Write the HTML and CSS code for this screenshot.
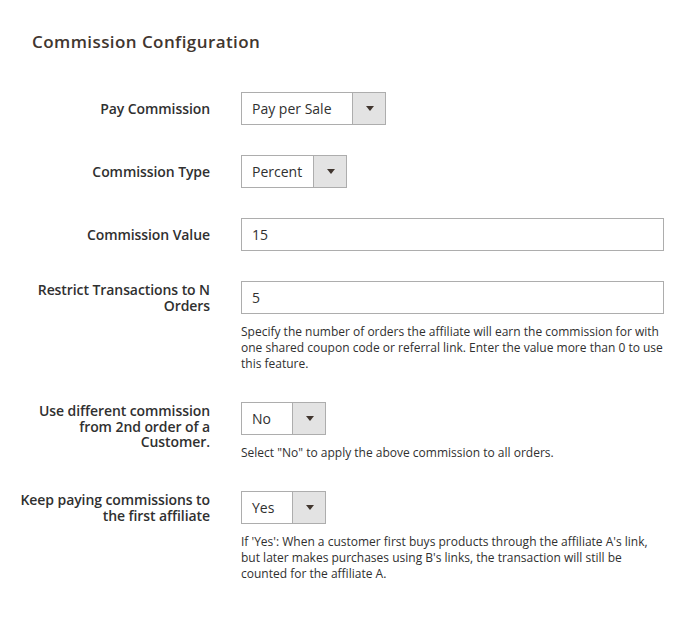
FILE: index.html
```html
<!DOCTYPE html>
<html>
<head>
<meta charset="utf-8">
<link rel="stylesheet" href="styles.css">
</head>
<body>
<div class="page">
  <h2 class="title">Commission Configuration</h2>
  <div class="fields">
    <div class="row">
      <label class="label">Pay Commission</label>
      <div class="control">
        <div class="select w-sale"><span class="value">Pay per Sale</span><span class="arrow"></span></div>
      </div>
    </div>
    <div class="row">
      <label class="label">Commission Type</label>
      <div class="control">
        <div class="select w-percent"><span class="value">Percent</span><span class="arrow"></span></div>
      </div>
    </div>
    <div class="row">
      <label class="label">Commission Value</label>
      <div class="control">
        <div class="input">15</div>
      </div>
    </div>
    <div class="row">
      <label class="label multi">Restrict Transactions to N<br>Orders</label>
      <div class="control">
        <div class="input">5</div>
        <p class="note">Specify the number of orders the affiliate will earn the commission for with one shared coupon code or referral link. Enter the value more than 0 to use this feature.</p>
      </div>
    </div>
    <div class="row">
      <label class="label multi">Use different commission<br>from 2nd order of a<br>Customer.</label>
      <div class="control">
        <div class="select w-small"><span class="value">No</span><span class="arrow"></span></div>
        <p class="note">Select "No" to apply the above commission to all orders.</p>
      </div>
    </div>
    <div class="row">
      <label class="label multi">Keep paying commissions to<br>the first affiliate</label>
      <div class="control">
        <div class="select w-small"><span class="value">Yes</span><span class="arrow"></span></div>
        <p class="note">If 'Yes': When a customer first buys products through the affiliate A's link, but later makes purchases using B's links, the transaction will still be counted for the affiliate A.</p>
      </div>
    </div>
  </div>
</div>
</body>
</html>
```
FILE: styles.css
```css
* { box-sizing: border-box; }
html, body { margin: 0; padding: 0; background: #fff; }
body {
  font-family: "Open Sans", "Noto Sans", sans-serif;
  color: #303030;
}
.page {
  padding: 32px 0 0 0;
}
.title {
  margin: 0 0 40px 32px;
  font-size: 17px;
  line-height: 20px;
  font-weight: 600;
  letter-spacing: 0.025em;
  color: #41362f;
}
.fields {
  display: flex;
  flex-direction: column;
  gap: 30px;
}
.row {
  display: grid;
  grid-template-columns: 210px 422px;
  column-gap: 31px;
  align-items: start;
}
.label {
  text-align: right;
  font-size: 14px;
  font-weight: 600;
  line-height: 15.5px;
  letter-spacing: -0.08px;
  padding-top: 9px;
  color: #303030;
}
.label.multi {
  padding-top: 1px;
}
.control {
  display: flex;
  flex-direction: column;
  align-items: flex-start;
}
.select {
  display: flex;
  height: 33px;
  border: 1px solid #adadad;
  background: #fff;
}
.select .value {
  flex: 1;
  font-size: 14px;
  line-height: 31px;
  padding-left: 10px;
  color: #303030;
}
.select .arrow {
  width: 33px;
  border-left: 1px solid #adadad;
  background: #e3e3e3;
  display: flex;
  align-items: center;
  justify-content: center;
}
.select .arrow::after {
  content: "";
  width: 0;
  height: 0;
  border-left: 4px solid transparent;
  border-right: 4px solid transparent;
  border-top: 5px solid #41362f;
  margin-left: 1px;
}
.w-sale { width: 145px; }
.w-percent { width: 106px; }
.w-small { width: 85px; }
.input {
  width: 423px;
  height: 33px;
  border: 1px solid #adadad;
  font-size: 14px;
  line-height: 31px;
  padding-left: 10px;
  color: #303030;
}
.note {
  margin: 10px 0 0 0;
  font-size: 12px;
  line-height: 16px;
  color: #303030;
  width: 422px;
}
```
